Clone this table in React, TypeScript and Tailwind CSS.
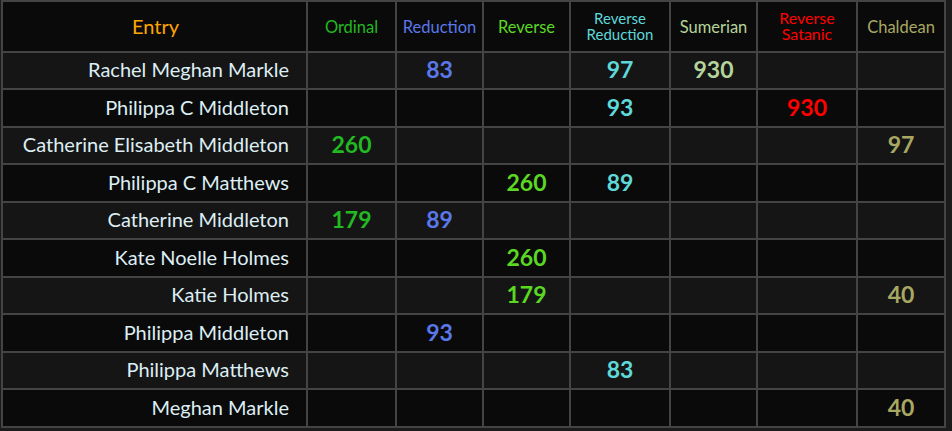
import React from 'react';

type Row = { name: string; v: (string | null)[] };

const cols = [
  { label: ['Ordinal'], color: 'text-[#22b922]', w: 'w-[89px]', size: 'text-[16.5px] leading-[17px] pt-[2px]' },
  { label: ['Reduction'], color: 'text-[#5a78ea]', w: 'w-[87px]', size: 'text-[16.5px] leading-[17px] pt-[2px]' },
  { label: ['Reverse'], color: 'text-[#5ad822]', w: 'w-[87px]', size: 'text-[16.5px] leading-[17px] pt-[2px]' },
  { label: ['Reverse', 'Reduction'], color: 'text-[#5ed8d8]', w: 'w-[100px]', size: 'text-[15px] leading-[16px] pb-[2px]' },
  { label: ['Sumerian'], color: 'text-[#b4d49a]', w: 'w-[87px]', size: 'text-[16.5px] leading-[17px] pt-[2px]' },
  { label: ['Reverse', 'Satanic'], color: 'text-[#ff0000]', w: 'w-[100px]', size: 'text-[16px] leading-[16px] pb-[2px]' },
  { label: ['Chaldean'], color: 'text-[#a8a862]', w: 'w-[88px]', size: 'text-[16.5px] leading-[17px] pt-[2px]' },
];

const rows: Row[] = [
  { name: 'Rachel Meghan Markle', v: [null, '83', null, '97', '930', null, null] },
  { name: 'Philippa C Middleton', v: [null, null, null, '93', null, '930', null] },
  { name: 'Catherine Elisabeth Middleton', v: ['260', null, null, null, null, null, '97'] },
  { name: 'Philippa C Matthews', v: [null, null, '260', '89', null, null, null] },
  { name: 'Catherine Middleton', v: ['179', '89', null, null, null, null, null] },
  { name: 'Kate Noelle Holmes', v: [null, null, '260', null, null, null, null] },
  { name: 'Katie Holmes', v: [null, null, '179', null, null, null, '40'] },
  { name: 'Philippa Middleton', v: [null, '93', null, null, null, null, null] },
  { name: 'Philippa Matthews', v: [null, null, null, '83', null, null, null] },
  { name: 'Meghan Markle', v: [null, null, null, null, null, null, '40'] },
];

export default function App() {
  return (
    <div className="w-[952px] h-[431px] bg-[#1b1b1b] pl-px overflow-hidden">
      <table
        className="table-fixed border-collapse border-2 border-[#444] w-[945px]"
        style={{ fontFamily: 'Lato, "Noto Sans", sans-serif' }}
      >
        <colgroup>
          <col className="w-[305px]" />
          {cols.map((c, i) => (
            <col key={i} className={c.w} />
          ))}
        </colgroup>
        <thead>
          <tr className="h-[51px] bg-[#0a0a0a]">
            <th className="border-2 border-[#444] p-0 pl-[2px] pb-[2px] text-[#ffa500] text-[20px] leading-[24px] font-normal text-center">
              Entry
            </th>
            {cols.map((c, i) => (
              <th
                key={i}
                className={`border-2 border-[#444] p-0 ${c.color} ${c.size} font-normal text-center`}
              >
                {c.label.map((l, j) => (
                  <div key={j}>{l}</div>
                ))}
              </th>
            ))}
          </tr>
        </thead>
        <tbody>
          {rows.map((r, i) => (
            <tr
              key={i}
              className={`${i % 2 === 1 ? 'h-[38px]' : 'h-[37px]'} ${i % 2 === 0 ? 'bg-[#151515]' : 'bg-[#0a0a0a]'}`}
            >
              <td className="border-2 border-[#444] p-0 pr-[17px] pb-[3px] text-right text-[20px] leading-[24px] text-[#ddeef4] whitespace-nowrap">
                {r.name}
              </td>
              {r.v.map((v, j) => (
                <td
                  key={j}
                  className={`border-2 border-[#444] p-0 pb-[3px] text-center text-[23px] leading-[26px] font-bold ${cols[j].color}`}
                >
                  {v}
                </td>
              ))}
            </tr>
          ))}
        </tbody>
      </table>
    </div>
  );
}
